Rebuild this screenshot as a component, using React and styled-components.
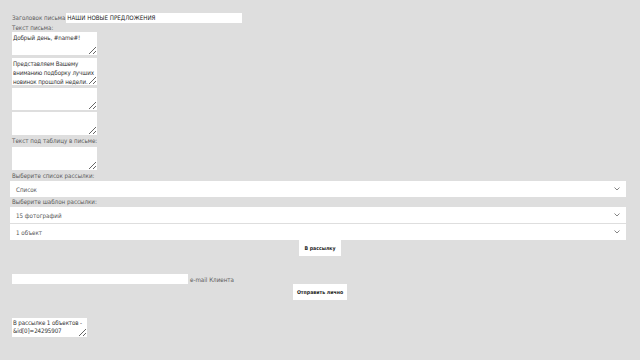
import React from 'react'
import styled, { createGlobalStyle } from 'styled-components'

const GlobalStyle = createGlobalStyle`
  html, body {
    margin: 0;
    background: #dedede;
  }
  body {
    font-family: "DejaVu Sans Condensed", "Liberation Sans", sans-serif;
    font-size: 6.2px;
    color: #5a5a5a;
  }
`

const Page = styled.div`
  width: 640px;
  height: 360px;
  box-sizing: border-box;
  padding: 13px 14px 0 12px;
  display: flex;
  flex-direction: column;
`

const TitleRow = styled.div`
  display: flex;
  align-items: center;
  height: 10px;
  line-height: 10px;
`

const TitleInput = styled.div`
  width: 176px;
  height: 10px;
  margin-left: 1px;
  background: #fff;
  color: #222;
  padding-left: 1px;
  box-sizing: border-box;
`

const Label = styled.div`
  height: ${p => p.h || 10}px;
  line-height: ${p => p.h || 10}px;
  white-space: nowrap;
`

const Area = styled.textarea`
  display: block;
  width: ${p => p.w || 85}px;
  height: ${p => p.h || 23}px;
  margin: 0 0 ${p => p.mb || 0}px 0;
  padding: 1px 0 0 1px;
  box-sizing: border-box;
  border: none;
  outline: none;
  background: #fff;
  color: #333;
  font-family: inherit;
  font-size: 6.2px;
  letter-spacing: -0.12px;
  line-height: ${p => p.lh || 9}px;
  resize: both;
  overflow: hidden;
`

const Select = styled.div`
  margin-left: -2px;
  width: 616px;
  height: 16px;
  box-sizing: border-box;
  background: #fff;
  display: flex;
  align-items: center;
  justify-content: space-between;
  padding: 0 6px 0 6px;
  margin-bottom: ${p => p.mb || 0}px;
  color: #555;
`

const Chevron = () => (
  <svg width="6" height="4" viewBox="0 0 6 4">
    <path d="M0.5 0.5 L3 3 L5.5 0.5" fill="none" stroke="#777" strokeWidth="0.9" />
  </svg>
)

const ButtonRow = styled.div`
  display: flex;
  justify-content: center;
  padding-left: ${p => p.offset || 0}px;
  margin-top: ${p => p.mt || 0}px;
`

const Button = styled.div`
  height: 16px;
  padding: 0 ${p => p.px || 6}px;
  background: #fff;
  color: #222;
  font-size: 5.2px;
  font-weight: bold;
  line-height: 16px;
`

const EmailRow = styled.div`
  display: flex;
  align-items: center;
  height: 10px;
  margin-top: 18px;
`

const EmailInput = styled.div`
  width: 176px;
  height: 10px;
  background: #fff;
  margin-right: 2px;
`

const ResultArea = styled(Area)`
  margin-top: 18px;
`

export default function App() {
  return (
    <>
      <GlobalStyle />
      <Page>
        <TitleRow>
          Заголовок письма
          <TitleInput>НАШИ НОВЫЕ ПРЕДЛОЖЕНИЯ</TitleInput>
        </TitleRow>
        <Label h={9}>Текст письма:</Label>
        <Area h={23} mb={3} defaultValue="Добрый день, #name#!" />
        <Area h={27} mb={3} defaultValue="Представляем Вашему вниманию подборку лучших новинок прошлой недели." />
        <Area h={22} mb={2} defaultValue="" />
        <Area h={23} defaultValue="" />
        <Label h={12}>Текст под таблицу в письме:</Label>
        <Area h={23} defaultValue="" />
        <Label h={11}>Выберите список рассылки:</Label>
        <Select>
          Список
          <Chevron />
        </Select>
        <Label h={10}>Выберите шаблон рассылки:</Label>
        <Select mb={1}>
          15 фотографий
          <Chevron />
        </Select>
        <Select>
          1 объект
          <Chevron />
        </Select>
        <ButtonRow offset={2}>
          <Button px={5}>В рассылку</Button>
        </ButtonRow>
        <EmailRow>
          <EmailInput />
          e-mail Клиента
        </EmailRow>
        <ButtonRow offset={2}>
          <Button px={4}>Отправить лично</Button>
        </ButtonRow>
        <ResultArea w={75} h={19} lh={8} defaultValue="В рассылке 1 объектов - &id[0]=24295907" />
      </Page>
    </>
  )
}
